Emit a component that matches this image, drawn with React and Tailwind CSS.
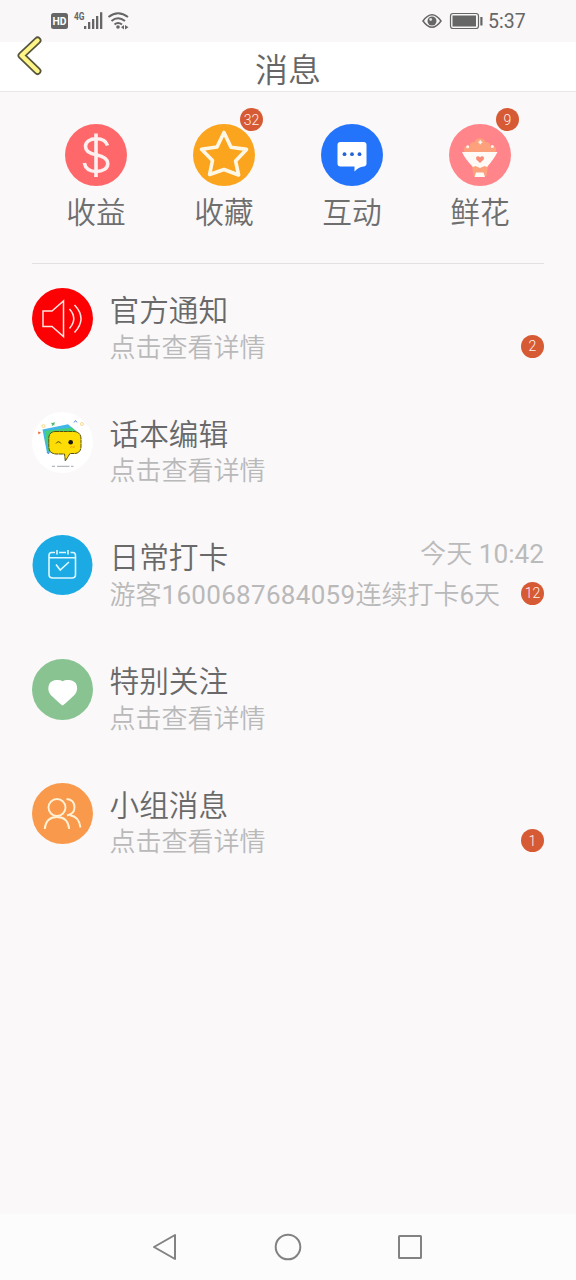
const Badge = ({ children }) => (
  <span className="flex h-[23px] w-[23px] items-center justify-center rounded-full bg-[#d65a34] text-[14px] leading-none text-[#fff3ee]">
    {children}
  </span>
);

const DollarIcon = () => (
  <svg viewBox="0 0 62 62" className="size-full" fill="none" stroke="#ffefef" strokeWidth="3.6">
    <circle cx="31" cy="31" r="31" fill="#ff686a" stroke="none" />
    <path d="M31 9.500V53" />
    <path d="M42.500 21.500C41 16.500 36.500 14.800 31 14.800c-6 0-10.500 3-10.500 7.700 0 5 4.500 7 10.500 8.300 7 1.500 11.800 3.500 11.800 8.700 0 5-5 8-11.500 8-6.300 0-10.800-2.800-12-8.500" />
  </svg>
);

const StarIcon = () => (
  <svg viewBox="0 0 62 62" className="size-full">
    <circle cx="31" cy="31" r="31" fill="#fba51f" />
    <path
      d="M31 8.500L38 23.200 53.500 25.400 42.600 37 45.600 51 31 45.500 16.600 50.500 19.500 36.500 8.500 25.200 24 23Z"
      fill="none"
      stroke="#fff7e6"
      strokeWidth="3.6"
      strokeLinejoin="round"
    />
  </svg>
);

const ChatIcon = () => (
  <svg viewBox="0 0 62 62" className="size-full">
    <circle cx="31" cy="31" r="31" fill="#2474fb" />
    <path d="M19.500 18H42.500Q45.500 18 45.500 21V39.500Q45.500 42 42.500 42.500 37.500 43 33.500 47.500V42.500H19.500Q16.500 42.500 16.500 39.500V21Q16.500 18 19.500 18Z" fill="#fff" />
    <g fill="#2464d8">
      <circle cx="23.500" cy="30.200" r="1.900" />
      <circle cx="31" cy="30.200" r="1.900" />
      <circle cx="38.500" cy="30.200" r="1.900" />
    </g>
  </svg>
);

const FlowerIcon = () => (
  <svg viewBox="0 0 62 62" className="size-full">
    <circle cx="31" cy="31" r="31" fill="#ff858a" />
    <g fill="#fda17c">
      <circle cx="31" cy="19.500" r="5.500" />
      <circle cx="25" cy="22.500" r="4.500" />
      <circle cx="37" cy="22.500" r="4.500" />
      <circle cx="18.500" cy="25.500" r="3.500" />
      <circle cx="43.500" cy="25.500" r="3.500" />
      <path d="M16 24H46V28.500H16ZM23 42H39L37.500 52H24.500Z" />
    </g>
    <path d="M13 28H48.500Q45 35 38 43L35.500 42 31 44 26.500 42 24 43Q16 35 13 28Z" fill="#fffaf6" />
    <path d="M27 48.500H34.500L36 53H25.500Z" fill="#fffaf6" />
    <path d="M31 39L27.300 35.500Q26.500 32.300 29 32.300 30.400 32.300 31 33.500 31.800 32.300 33.200 32.300 35.600 32.500 34.700 35.500Z" fill="#f98b78" />
    <g fill="#fff4ed">
      <path d="M30.500 16.200h1.600v1.200h1.200v1.600h-1.200v1.200h-1.600v-1.200h-1.200v-1.600h1.200Z" />
      <circle cx="18.700" cy="22.800" r="1.500" />
      <circle cx="43.300" cy="22.500" r="1.500" />
    </g>
  </svg>
);

const SpeakerIcon = () => (
  <svg viewBox="0 0 61 61" className="size-full" fill="none" stroke="#ffe5e0" strokeWidth="1.500">
    <circle cx="30.500" cy="30.500" r="30.500" fill="#fd0003" stroke="none" />
    <path d="M11 23H20L31.500 13V48.500L20 38.500H11Z" />
    <path d="M37.500 21Q46 30.500 37.500 40.500M42.500 17Q55.500 30.500 42.500 44.500" />
  </svg>
);

const EditorIcon = () => (
  <svg viewBox="0 0 61 61" className="size-full">
    <circle cx="30.500" cy="30.500" r="30.500" fill="#fff" />
    <path d="M10.500 17.500L36 12.300 44 19V36L15 41Z" fill="#42b6e8" />
    <path d="M12.500 19L40 15.500 45 20V36L16 39Z" fill="#45cf79" />
    <path
      d="M23 19.500H42Q49 20 49 27V34Q49 41 43 41.500H38L33.300 49 32.500 42H24Q17 41.500 16.800 35V26Q17 20 23 19.500Z"
      fill="#fedc05"
      stroke="#57500f"
      strokeWidth="1"
      strokeDasharray="4 .4"
    />
    <circle cx="38.700" cy="30.300" r="2.300" fill="#171611" />
    <path d="M24 31.500Q26.500 28 29 31.500" fill="none" stroke="#4d480d" strokeWidth="1" />
    <path d="M38 35.500l2-1 1 1 2-1" fill="none" stroke="#f39a18" strokeWidth="1" />
    <path d="M20 54.300H23M25 54.300H37.500M39 54.300H41.500" stroke="#8a9199" strokeWidth=".8" />
    <path d="M6 19.500l3 1-2.500 2Z" fill="#f26632" />
    <path d="M19.500 11l3 2M22.500 10.500l-2.500 3" stroke="#50b765" strokeWidth="1.200" />
    <path d="M42 10.500l1.500-2 1.500 2M15 40l1.500 2 .5-2" fill="none" stroke="#5791d8" strokeWidth="1" />
    <circle cx="11.500" cy="14" r="1.500" fill="none" stroke="#fbd98b" />
    <circle cx="50" cy="12" r="1.500" fill="none" stroke="#fbd98b" />
  </svg>
);

const CalendarIcon = () => (
  <svg viewBox="0 0 61 61" className="size-full" fill="none" stroke="#def8ff" strokeWidth="1.600">
    <circle cx="30.500" cy="30" r="30" fill="#1caae4" stroke="none" />
    <path d="M23 17.500H19.500Q17 17.500 17 20.500V39.500Q17 43 21 43H40Q43.500 43 43.500 39.500V20.500Q43.500 17.500 41 17.500H38.500M27 17.500H34M17 22.700H43.500M25 15V19.500M36 15V19.500M24 29.500L28.200 35 37 27" />
  </svg>
);

const HeartIcon = () => (
  <svg viewBox="0 0 61 61" className="size-full">
    <circle cx="30.500" cy="30.500" r="30.500" fill="#88c391" />
    <path d="M30.600 46.500Q29 46 18.500 35.800 14.500 30.500 17.500 24.500 20.500 20.500 25.500 21 29 21 30.600 22.300 32.500 21 35.500 21 41 20.500 44 24.500 47 30.500 42.700 35.800 32 46 30.600 46.500Z" fill="#fff" />
  </svg>
);

const GroupIcon = () => (
  <svg viewBox="0 0 61 61" className="size-full" fill="none" stroke="#fff1d5" strokeWidth="1.900">
    <circle cx="30.500" cy="30.500" r="30.500" fill="#f9994c" stroke="none" />
    <circle cx="25" cy="24.500" r="8.500" />
    <path d="M12.700 46Q14 34 25 34 36 34 37.200 46M34.500 16Q42.500 16.500 42.500 24.500 42.500 31 35 32.500M38 32.300Q47 33.500 48.500 44.500" />
  </svg>
);

const shortcuts = [
  { label: "收益", Icon: DollarIcon },
  { label: "收藏", Icon: StarIcon, badge: 32 },
  { label: "互动", Icon: ChatIcon },
  { label: "鲜花", Icon: FlowerIcon, badge: 9 },
];

const checkIn = (
  <>
    游客<span className="font-normal tracking-[0.300px]">1600687684059</span>连续打卡<span className="font-normal">6</span>天
  </>
);

const messages = [
  { title: "官方通知", text: "点击查看详情", Icon: SpeakerIcon, badge: 2 },
  { title: "话本编辑", text: "点击查看详情", Icon: EditorIcon },
  {
    title: "日常打卡",
    text: checkIn,
    Icon: CalendarIcon,
    badge: 12,
    time: <>今天 <span className="font-normal">10:42</span></>,
  },
  { title: "特别关注", text: "点击查看详情", Icon: HeartIcon },
  { title: "小组消息", text: "点击查看详情", Icon: GroupIcon, badge: 1 },
];

const StatusBar = () => (
  <div className="flex h-[42px] items-center justify-between bg-[#f9f7f8] pr-[51px] pl-[50px] text-[#666]">
    <svg width="82" height="22" viewBox="50 10 82 22" fill="#666">
      <rect x="51" y="13" width="17" height="16" rx="2.500" />
      <text x="59.500" y="25" fontSize="11" fontWeight="700" fill="#fff" textAnchor="middle" textLength="14" lengthAdjust="spacingAndGlyphs">HD</text>
      <text x="74" y="20" fontSize="10.500" fontWeight="700" textLength="10.500" lengthAdjust="spacingAndGlyphs">4G</text>
      <path d="M84 26h2.300v3H84ZM88 22h2.300v7H88ZM92 19h2.300v10H92ZM96 16h2.300v13H96ZM100 12.300h2.300V29H100Z" />
      <g fill="none" stroke="#666" strokeWidth="2">
        <path d="M108.500 17Q118 9.500 128 17M111.500 21Q118 15.500 125 21M114.500 24.500Q118 21.500 122 24.500" />
      </g>
      <circle cx="118" cy="27" r="1.800" />
      <path d="M121 27.300l3-2.300v4.600ZM125 25l3.500 2.300-3.500 2.300Z" />
    </svg>
    <div className="flex items-center">
      <svg width="62" height="22" viewBox="421 10 62 22" fill="none" stroke="#666">
        <path d="M423 21Q432 8.500 441 21 432 33.500 423 21Z" strokeWidth="1.500" />
        <circle cx="432" cy="21" r="4.500" fill="#666" stroke="none" />
        <circle cx="430.700" cy="19.500" r="1.400" fill="#ddd" stroke="none" />
        <rect x="450.500" y="13.500" width="28" height="15" rx="2.500" strokeWidth="1.200" />
        <path d="M452.500 15.500h23.500v11h-23.500ZM480.300 17h2.200v8.500h-2.200Z" fill="#666" stroke="none" />
      </svg>
      <span className="ml-[5px] w-[37px] pt-[2px] text-[19.500px] leading-[22px] font-normal whitespace-nowrap">5:37</span>
    </div>
  </div>
);

export default function App() {
  return (
    <div className="flex h-[1280px] w-[576px] flex-col overflow-hidden bg-[#faf8f9] font-[Roboto,'Noto_Sans_CJK_SC',sans-serif] font-[350]">
      <StatusBar />
      <header className="relative flex h-[50px] items-center justify-center border-b border-[#e8e6e7] bg-white">
        <svg className="absolute -top-[6px] left-[16px]" width="28" height="40" viewBox="16 36 28 40" fill="none" strokeLinecap="round" strokeLinejoin="round">
          <path d="M37.500 40.500L21.500 55.500 37.500 71" stroke="#55543e" strokeWidth="7.800" />
          <path d="M37.500 40.500L21.500 55.500 37.500 71" stroke="#fff587" strokeWidth="4.400" />
        </svg>
        <h1 className="pt-[9px] text-[33px] leading-[40px] text-[#666]">消息</h1>
      </header>

      <nav className="mx-8 grid h-[172px] grid-cols-4 border-b border-[#e3e1e2] pt-[32px]">
        {shortcuts.map(({ label, Icon, badge }) => (
          <div key={label} className="flex flex-col items-center">
            <div className="relative size-[62px]">
              <Icon />
              {badge && <div className="absolute -top-[16px] -right-[8px]"><Badge>{badge}</Badge></div>}
            </div>
            <span className="mt-[7px] text-[29.700px] leading-[40px] text-[#6e6e6e]">{label}</span>
          </div>
        ))}
      </nav>

      <main className="flex-1 px-8">
        {messages.map(({ title, text, Icon, badge, time }) => (
          <section key={title} className="flex h-[123.700px] gap-[16.500px] pt-[24px]">
            <div className="size-[61px] shrink-0"><Icon /></div>
            <div className="flex min-w-0 flex-1 flex-col">
              <div className="flex h-[42px] items-center justify-between">
                <h2 className="pt-[4px] text-[29.700px] leading-[42px] text-[#696969]">{title}</h2>
                {time && <time className="pb-[5px] text-[26.200px] leading-[36px] text-[#bbb]">{time}</time>}
              </div>
              <div className="flex h-[32px] items-center justify-between">
                <p className="pt-[3px] text-[26px] leading-[32px] whitespace-nowrap text-[#b9b9b9]">{text}</p>
                {badge && <Badge>{badge}</Badge>}
              </div>
            </div>
          </section>
        ))}
      </main>

      <footer className="flex h-[66px] items-center justify-center bg-[#fcfcfc]">
        <svg width="276" height="30" viewBox="150 1232 276 30" fill="none" stroke="#828282" strokeWidth="2" strokeLinejoin="round">
          <path d="M154 1247L175 1235V1259Z" />
          <circle cx="288" cy="1247" r="12.300" />
          <rect x="399" y="1236" width="22" height="22" rx=".5" />
        </svg>
      </footer>
    </div>
  );
}
